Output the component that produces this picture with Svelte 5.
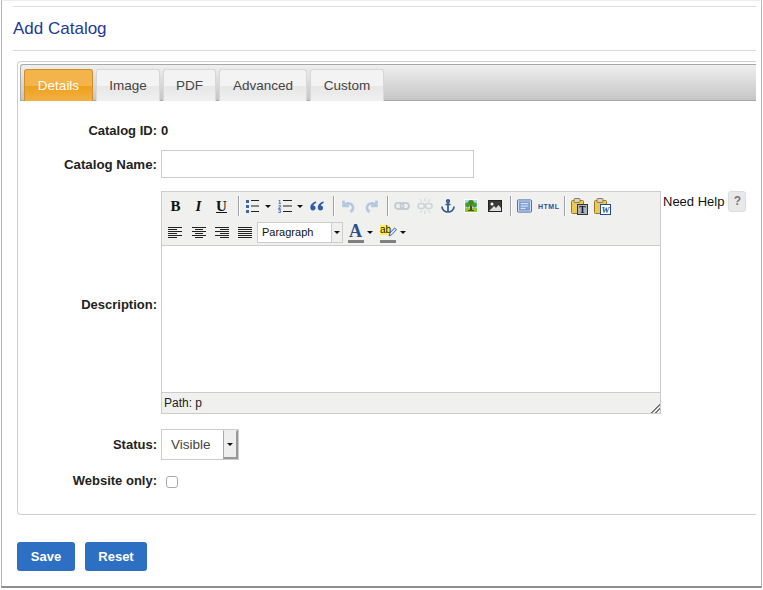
<script>
  const tabs = ['Details', 'Image', 'PDF', 'Advanced', 'Custom'];
</script>

<div class="window">
  <div class="rule top"></div>
  <h1>Add Catalog</h1>
  <div class="rule"></div>

  <section class="panel">
    <nav class="tabbar">
      {#each tabs as t, i}
        <div class="tab" class:active={i === 0}>{t}</div>
      {/each}
    </nav>

    <div class="form">
      <div class="row r-id">
        <div class="label">Catalog ID:</div>
        <div class="value">0</div>
      </div>
      <div class="row r-name">
        <div class="label wide">Catalog Name:</div>
        <div class="textbox"></div>
      </div>
      <div class="row r-desc">
        <div class="label desc">Description:</div>
        <div class="editor">
          <div class="toolbar">
            <div class="tline">
              <span class="ic b">B</span>
              <span class="ic i">I</span>
              <span class="ic u">U</span>
              <span class="sep"></span>
              <svg class="ic2 ul" viewBox="0 0 14 14"><g fill="#3a66a8"><rect x="0" y="1" width="3" height="3"/><rect x="0" y="6" width="3" height="3"/><rect x="0" y="11" width="3" height="3"/></g><g fill="#222"><rect x="5" y="1" width="8" height="1"/><rect x="5" y="6.500" width="8" height="1"/><rect x="5" y="12" width="8" height="1"/></g></svg>
              <span class="caret c-list"></span>
              <svg class="ic2 ul" viewBox="0 0 14 14"><g fill="#2f62b0" font-family="Liberation Sans" font-size="5.500" font-weight="700"><text x="0" y="4.500">1</text><text x="0" y="9.500">2</text><text x="0" y="14">3</text></g><g fill="#222"><rect x="5" y="1" width="9" height="1"/><rect x="5" y="6.500" width="9" height="1"/><rect x="5" y="12" width="9" height="1"/></g></svg>
              <span class="caret c-list"></span>
              <svg class="ic2 quote" viewBox="0 0 14 14"><path fill="#2f5da6" d="M6 2.500C2.800 3.300 .300 5.500 .300 8.500c0 1.900 1.100 3 2.600 3s2.700-1.100 2.700-2.500-1-2.400-2.300-2.400c.3-1.100 1.400-2 2.900-2.600zM13.500 2.500c-3.200.8-5.700 3-5.700 6 0 1.900 1.100 3 2.600 3s2.700-1.100 2.700-2.500-1-2.400-2.300-2.400c.3-1.100 1.400-2 2.900-2.600z"/></svg>
              <span class="sep s2"></span>
              <svg class="ic2 undo" viewBox="0 0 14 14"><path fill="none" stroke="#b4c8e2" stroke-width="2.600" d="M2.500 1.500v5.500H8M3 6.500C5.500 3 11 4 12 8c.4 2-.8 3.800-2.500 5"/></svg>
              <svg class="ic2 redo" viewBox="0 0 14 14"><path fill="none" stroke="#b4c8e2" stroke-width="2.600" d="M11.500 1.500v5.500H6M11 6.500C8.500 3 3 4 2 8c-.4 2 .8 3.800 2.500 5"/></svg>
              <span class="sep s3"></span>
              <svg class="ic2 link" viewBox="0 0 16 14"><g fill="none" stroke="#c4cbd4" stroke-width="1.800"><rect x="1" y="4" width="8.500" height="6" rx="3"/><rect x="6.500" y="4" width="8.500" height="6" rx="3"/></g></svg>
              <svg class="ic2 unlink" viewBox="0 0 16 16"><g fill="none" stroke="#cfd4da" stroke-width="1.600"><rect x="1" y="5.500" width="6.500" height="5" rx="2.500"/><rect x="8.500" y="5.500" width="6.500" height="5" rx="2.500"/><path stroke-width="1" d="M8 0v3.500M8 12.500V16M3 1l2 3M13 1l-2 3M3 15l2-3M13 15l-2-3"/></g></svg>
              <svg class="ic2 anchor" viewBox="0 0 14 14"><g fill="none" stroke="#2f5a8f" stroke-width="1.700"><circle cx="7" cy="2.200" r="1.300"/><path d="M7 3.500v9.500M4.500 5.500h5M1 7.500c0 3.500 3 5.500 6 5.500s6-2 6-5.500"/></g></svg>
              <svg class="ic2 tree" viewBox="0 0 14 14"><rect width="14" height="14" fill="#fff"/><rect x="1" y="1" width="12" height="8" fill="#a8d8ee"/><rect x="1" y="9" width="12" height="4" fill="#8ec63f"/><circle cx="7" cy="4" r="3" fill="#3f8a1c"/><circle cx="3.500" cy="6" r="2.400" fill="#4c9a22"/><circle cx="10.500" cy="6" r="2.400" fill="#4c9a22"/><rect x="6" y="7" width="2" height="5" fill="#6b3f16"/><rect x="4" y="11" width="6" height="1" fill="#6b3f16"/></svg>
              <svg class="ic2 pic" viewBox="0 0 14 12"><rect width="14" height="12" fill="#222"/><rect x="1" y="1" width="12" height="10" fill="#3a3a3a"/><circle cx="4" cy="4" r="1.500" fill="#fff"/><path fill="#ddd" d="M1 11l5-5 2 2 2.500-3 2.500 3v3z"/></svg>
              <span class="sep s4"></span>
              <svg class="ic2 src" viewBox="0 0 16 14"><rect x=".5" y=".5" width="15" height="13" rx="1" fill="#dce6f5" stroke="#3d66a5"/><rect x="2" y="2" width="12" height="10" fill="#7d9fd6"/><g fill="#eef3fb"><rect x="4" y="4" width="8" height="1"/><rect x="4" y="6.500" width="8" height="1"/><rect x="4" y="9" width="5" height="1"/></g></svg>
              <span class="html">HTML</span>
              <span class="sep s5"></span>
              <svg class="paste" viewBox="0 0 17 17"><rect x=".5" y="2.500" width="12" height="13" rx="1" fill="#efc851" stroke="#97782a"/><rect x="3" y=".5" width="6" height="4" rx="1" fill="#d8d4c0" stroke="#8a7d55"/><rect x="6.500" y="6.500" width="10" height="10" fill="#a9b4c0" stroke="#333"/><text x="11.500" y="15" text-anchor="middle" font-family="Liberation Serif" font-weight="700" font-size="9.500" fill="#111">T</text></svg>
              <svg class="paste p2" viewBox="0 0 17 17"><rect x=".5" y="2.500" width="12" height="13" rx="1" fill="#efc851" stroke="#97782a"/><rect x="3" y=".5" width="6" height="4" rx="1" fill="#d8d4c0" stroke="#8a7d55"/><rect x="6.500" y="6.500" width="10" height="10" fill="#fff" stroke="#1d4f9c"/><text x="11.500" y="15" text-anchor="middle" font-family="Liberation Serif" font-weight="700" font-style="italic" font-size="9" fill="#1d4f9c">W</text></svg>
            </div>
            <div class="tline second">
              <svg class="ic2 al a1" viewBox="0 0 14 14"><path stroke="#222" d="M0 1.500h14M0 3.500h9M0 5.500h14M0 7.500h9M0 9.500h14M0 11.500h9"/></svg>
              <svg class="ic2 al a2" viewBox="0 0 14 14"><path stroke="#222" d="M0 1.500h14M3 3.500h8M0 5.500h14M3 7.500h8M0 9.500h14M3 11.500h8"/></svg>
              <svg class="ic2 al a3" viewBox="0 0 14 14"><path stroke="#222" d="M0 1.500h14M5 3.500h9M0 5.500h14M5 7.500h9M0 9.500h14M5 11.500h9"/></svg>
              <svg class="ic2 al a4" viewBox="0 0 14 14"><path stroke="#222" d="M0 1.500h14M0 3.500h14M0 5.500h14M0 7.500h14M0 9.500h14M0 11.500h14"/></svg>
              <div class="format"><span class="ftext">Paragraph</span><span class="fbtn"><span class="caret"></span></span></div>
              <div class="color"><span class="A">A</span><span class="bar"></span></div>
              <span class="caret c-a"></span>
              <div class="color hl"><span class="ab">ab</span><svg class="pen" viewBox="0 0 9 10"><path fill="#dfe8f4" stroke="#3d66a5" d="M1 9l1-3 4.500-5L8.500 2.500l-4.500 5z"/></svg><span class="bar"></span></div>
              <span class="caret c-h"></span>
            </div>
          </div>
          <div class="content"></div>
          <div class="status">Path: p<span class="grip"></span></div>
        </div>
        <div class="help">Need Help <span class="q">?</span></div>
      </div>
      <div class="row r-status">
        <div class="label">Status:</div>
        <div class="select"><span class="sel">Visible</span><span class="sbtn"><span class="caret"></span></span></div>
      </div>
      <div class="row r-web">
        <div class="label">Website only:</div>
        <span class="check"></span>
      </div>
    </div>
  </section>

  <div class="buttons">
    <button class="save">Save</button>
    <button class="reset">Reset</button>
  </div>
</div>

<style>
  :global(body) { margin: 0; background: #fff; }
  * { box-sizing: border-box; }
  .window {
    width: 761px; height: 588px; margin-left: 1px;
    padding: 5px 5px 0 11px;
    border: 1px solid #b4b4b4; border-top: 1px solid #eee;
    border-bottom: 2px solid #8e8e8e;
    font-family: "Liberation Sans", Arial, sans-serif; font-size: 13px; color: #222;
    background: #fff;
  }
  .rule { height: 1px; background: #d9d9d9; }
  .rule.top { background: #dcdcdc; }
  h1 { margin: 0; height: 43px; padding-top: 12px; font-size: 17px; line-height: 20px; font-weight: 400; color: #24389a; }
  .panel {
    margin: 10px 0 0 4px; height: 454px;
    border: 1px solid #cfcfcf; border-right: 0; border-radius: 4px 0 0 4px;
    padding: 2px 0 0 2px;
  }
  .tabbar {
    display: flex; gap: 3px; height: 37px; padding: 4px 0 0 3px;
    border: 1px solid #a8a8a8; border-right: 0; border-radius: 3px 0 0 0;
    background: linear-gradient(#efefef, #c6c6c6);
  }
  .tab {
    height: 32px; text-align: center; line-height: 31px; font-size: 13.500px; color: #444;
    background: linear-gradient(#f3f3f3 0 50%, #e7e7e7 50%, #efefef);
    border: 1px solid #d8d8d8; border-bottom: 0; border-radius: 3px 3px 0 0;
  }
  .tab:nth-child(1) { width: 69px; }
  .tab:nth-child(2) { width: 64px; }
  .tab:nth-child(3) { width: 53px; }
  .tab:nth-child(4) { width: 88px; }
  .tab:nth-child(5) { width: 74px; }
  .tab.active {
    color: #fff; background: linear-gradient(#f4b44c 0 50%, #ef9f1a 50%, #f2b046);
    border-color: #d08f2a;
  }
  .form { display: flex; flex-direction: column; }
  .row { display: flex; align-items: center; margin-left: -3px; }
  .label { width: 140px; text-align: right; font-weight: 700; flex: none; }
  .label.wide { font-size: 13.300px; }
  .label.desc { padding-top: 3px; align-self: center; }
  .value, .textbox, .editor, .select { margin-left: 4px; }
  .value { font-weight: 700; }
  .r-id { height: 16px; margin-top: 21px; }
  .r-name { margin-top: 12px; height: 28px; }
  .textbox { width: 313px; height: 28px; background: #fff; border: 1px solid #ccc; }
  .r-desc { margin-top: 13px; height: 223px; position: relative; }
  .editor { width: 500px; height: 223px; border: 1px solid #ccc; display: flex; flex-direction: column; }
  .toolbar { height: 54px; background: #f0f0ee; border-bottom: 1px solid #ccc; flex: none; }
  .tline { display: flex; align-items: center; height: 28px; padding-left: 5px; }
  .second { height: 25px; }
  .ic { width: 17px; text-align: center; font-family: "Liberation Serif", serif; font-size: 15px; font-weight: 700; color: #111; margin-right: 6px; }
  .ic.i { font-style: italic; }
  .ic.u { text-decoration: underline; margin-right: 8px; }
  .sep { height: 20px; width: 2px; background: #9aa3ad; border-right: 1px solid #fff; margin: 0 6px 0 0; flex: none; }
  .ic2 { width: 14px; height: 14px; flex: none; display: block; }
  .caret { display: inline-block; width: 0; height: 0; border: 3px solid transparent; border-top: 3px solid #111; border-bottom: 0; flex: none; }
  .c-list { margin: 0 7px 0 5px; }
  .sep.s2 { margin-left: 9px; margin-right: 6px; }
  .undo { margin-right: 10px; }
  .sep.s3 { margin-left: 8px; margin-right: 5px; }
  .link { width: 16px; margin-right: 7px; }
  .unlink { width: 16px; height: 16px; margin-right: 8px; }
  .anchor { margin-right: 9px; }
  .tree { margin-right: 10px; }
  .pic { height: 12px; margin-right: 8px; }
  .sep.s4 { margin-right: 5px; }
  .src { width: 15px; margin-right: 6px; }
  .html { font-size: 7px; font-weight: 700; color: #2a4f9c; letter-spacing: .5px; width: 20px; margin-right: 6px; }
  .sep.s5 { margin-right: 5px; }
  .paste { width: 17px; height: 17px; margin-right: 6px; flex: none; }
  .a1 { margin-left: 1px; margin-right: 10px; }
  .a2, .a3 { margin-right: 9px; }
  .a4 { margin-right: 5px; }
  .format { display: flex; width: 86px; height: 21px; background: #fff; border: 1px solid #ccc; flex: none; }
  .ftext { flex: 1; padding-left: 4px; font-size: 11px; line-height: 19px; color: #111; }
  .fbtn { width: 11px; background: #f0f0ee; border-left: 1px solid #ccc; display: flex; align-items: center; justify-content: center; }
  .color { position: relative; width: 16px; height: 20px; margin-left: 5px; flex: none; }
  .A { position: absolute; left: 1px; top: -1px; font-family: "Liberation Serif", serif; font-weight: 700; font-size: 18px; line-height: 19px; color: #2a4f8f; }
  .bar { position: absolute; left: 0; right: 0; bottom: 0; height: 3px; background: #808080; }
  .c-a { margin-left: 3px; }
  .c-h { margin-left: 4px; }
  .hl { margin-left: 7px; }
  .ab { position: absolute; left: 0; top: 2px; height: 10px; width: 10px; background: #ffee44; font-size: 10px; line-height: 9px; color: #222; }
  .pen { position: absolute; left: 8px; top: 4px; width: 9px; height: 10px; }
  .content { flex: 1; background: #fff; }
  .status { height: 21px; background: #f0f0ee; border-top: 1px solid #ccc; padding: 3px 0 0 2px; font-size: 12px; line-height: 15px; color: #222; position: relative; }
  .grip { position: absolute; right: 0; bottom: 0; width: 11px; height: 11px; background: repeating-linear-gradient(135deg, #777 0 1.400px, transparent 1.400px 3px); clip-path: polygon(100% 0, 100% 100%, 0 100%); }
  .help { position: absolute; left: 646px; top: 0; color: #111; display: flex; align-items: center; gap: 4px; white-space: nowrap; }
  .q { width: 18px; height: 21px; background: #e9e9e9; border: 1px solid #ddd; border-radius: 3px; color: #777; text-align: center; font-weight: 700; font-size: 12px; line-height: 19px; }
  .r-status { margin-top: 15px; height: 31px; }
  .select { display: flex; width: 78px; height: 31px; border: 1px solid #ccc; background: #fff; }
  .sel { flex: 1; padding-left: 9px; font-size: 13.500px; line-height: 29px; color: #444; }
  .sbtn { width: 15px; background: #eee; border: 1px solid #eee; border-left: 1px solid #aaa; border-right: 2px solid #999; border-bottom: 2px solid #999; display: flex; align-items: center; justify-content: center; }
  .r-web { margin-top: 10px; height: 20px; }
  .check { width: 12px; height: 12px; margin-left: 9px; margin-top: 3px; background: #fff; border: 1px solid #aaa; border-radius: 3px; }
  .buttons { display: flex; gap: 10px; margin: 27px 0 0 4px; }
  button {
    height: 29px; border: 0; border-radius: 3px; background: #2d6fc2; color: #fff; padding: 0;
    font-family: "Liberation Sans", Arial, sans-serif; font-size: 13px; font-weight: 700;
  }
  .save { width: 58px; }
  .reset { width: 62px; }
</style>
